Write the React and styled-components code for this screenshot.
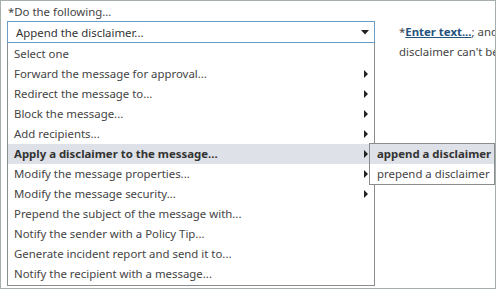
import React from "react";
import styled, { createGlobalStyle } from "styled-components";

const Global = createGlobalStyle`
  html, body { margin: 0; padding: 0; background: #fff; }
  body { font-family: "Noto Sans", "Open Sans", Arial, sans-serif; }
`;

const Frame = styled.div`
  width: 496px;
  height: 289px;
  box-sizing: border-box;
  border: 1px solid #a6adad;
  padding: 0 0 0 6px;
  overflow: hidden;
  position: relative;
  font-size: 11.4px;
  color: #444;
`;

const Label = styled.div`
  height: 20px;
  line-height: 21px;
  padding-left: 1px;
  color: #444;
`;

const Row = styled.div`
  display: flex;
  align-items: flex-start;
`;

const SelectWrap = styled.div`
  position: relative;
  width: 368px;
  flex: none;
`;

const SelectBox = styled.div`
  box-sizing: border-box;
  height: 22px;
  border: 1px solid #6c9dc6;
  display: flex;
  align-items: center;
  justify-content: space-between;
  padding: 0 5px 0 8px;
  color: #333;
`;

const List = styled.ul`
  position: absolute;
  left: 0;
  top: 22px;
  width: 368px;
  box-sizing: border-box;
  margin: 0;
  padding: 1px 0 1px;
  list-style: none;
  border: 1px solid #8a8d90;
  border-top: none;
  background: #fff;
`;

const Item = styled.li`
  position: relative;
  height: 20px;
  line-height: 20px;
  padding: 0 6px;
  display: flex;
  align-items: center;
  justify-content: space-between;
  background: ${(p) => (p.$active ? "#dee1e7" : "transparent")};
  font-weight: ${(p) => (p.$active ? 700 : 400)};
  color: ${(p) => (p.$active ? "#333" : "#444")};
  white-space: nowrap;
`;

const Sub = styled.ul`
  position: absolute;
  left: 361px;
  top: -1px;
  margin: 0;
  padding: 0;
  list-style: none;
  box-sizing: border-box;
  border: 1px solid #8a8d90;
  background: #fff;
  width: 126px;
  z-index: 2;
`;

const SubItem = styled.li`
  height: 20px;
  line-height: 20px;
  padding-left: 7px;
  background: ${(p) => (p.$active ? "#dee1e7" : "#fff")};
  font-weight: ${(p) => (p.$active ? 700 : 400)};
  color: ${(p) => (p.$active ? "#333" : "#444")};
  white-space: nowrap;
`;

const Side = styled.div`
  margin-left: 24px;
  padding-top: 1px;
  line-height: 20px;
  white-space: nowrap;
  color: #444;
`;

const LinkText = styled.a`
  color: #24527c;
  font-weight: 700;
  text-decoration: underline;
`;

const DownArrow = () => (
  <svg width="8" height="5" viewBox="0 0 8 5">
    <path d="M0 0h8L4 4.5z" fill="#222" />
  </svg>
);

const RightArrow = () => (
  <svg width="4" height="8" viewBox="0 0 4 8">
    <path d="M0 0l4 4-4 4z" fill="#222" />
  </svg>
);

const items = [
  ["Select one", false],
  ["Forward the message for approval...", true],
  ["Redirect the message to...", true],
  ["Block the message...", true],
  ["Add recipients...", true],
  ["Apply a disclaimer to the message...", true],
  ["Modify the message properties...", true],
  ["Modify the message security...", true],
  ["Prepend the subject of the message with...", false],
  ["Notify the sender with a Policy Tip...", false],
  ["Generate incident report and send it to...", false],
  ["Notify the recipient with a message...", false],
];

export default function App() {
  return (
    <>
      <Global />
      <Frame>
        <Label>*Do the following...</Label>
        <Row>
          <SelectWrap>
            <SelectBox>
              <span>Append the disclaimer...</span>
              <DownArrow />
            </SelectBox>
            <List>
              {items.map(([t, sub], i) => (
                <Item key={t} $active={i === 5}>
                  <span>{t}</span>
                  {sub && <RightArrow />}
                  {i === 5 && (
                    <Sub>
                      <SubItem $active>append a disclaimer</SubItem>
                      <SubItem>prepend a disclaimer</SubItem>
                    </Sub>
                  )}
                </Item>
              ))}
            </List>
          </SelectWrap>
          <Side>
            *<LinkText>Enter text...</LinkText>; and
            <br />
            disclaimer can't be
          </Side>
        </Row>
      </Frame>
    </>
  );
}
